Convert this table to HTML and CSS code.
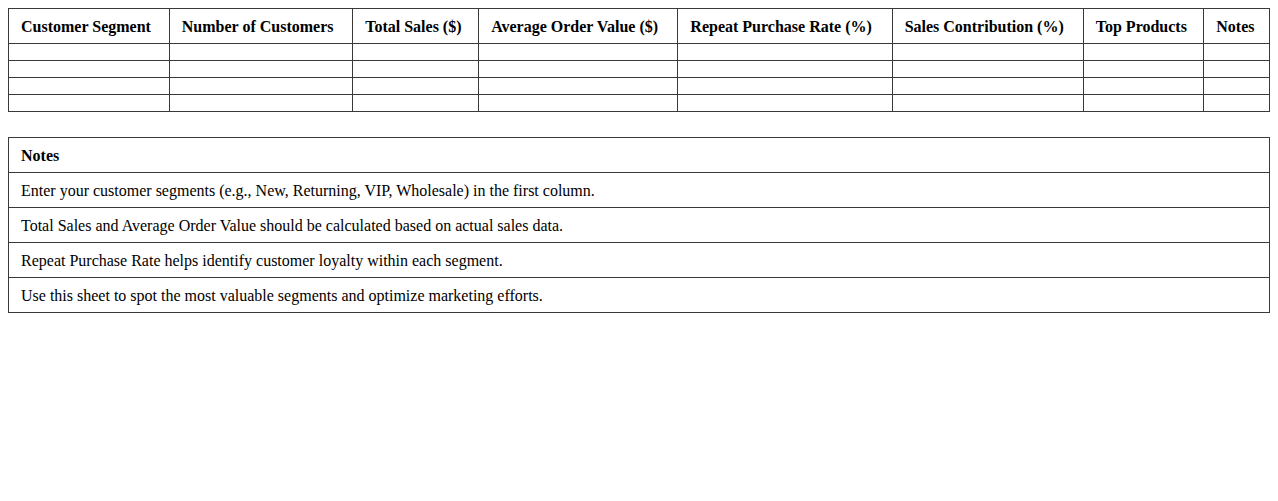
FILE: index.html
```html
<!DOCTYPE html>
<html>
<head>
<meta charset="utf-8">
<link rel="stylesheet" href="styles.css">
</head>
<body>
<table class="sheet">
  <thead>
    <tr>
      <th>Customer Segment</th>
      <th>Number of Customers</th>
      <th>Total Sales ($)</th>
      <th>Average Order Value ($)</th>
      <th>Repeat Purchase Rate (%)</th>
      <th>Sales Contribution (%)</th>
      <th>Top Products</th>
      <th>Notes</th>
    </tr>
  </thead>
  <tbody>
    <tr><td></td><td></td><td></td><td></td><td></td><td></td><td></td><td></td></tr>
    <tr><td></td><td></td><td></td><td></td><td></td><td></td><td></td><td></td></tr>
    <tr><td></td><td></td><td></td><td></td><td></td><td></td><td></td><td></td></tr>
    <tr><td></td><td></td><td></td><td></td><td></td><td></td><td></td><td></td></tr>
  </tbody>
</table>
<table class="sheet notes">
  <thead>
    <tr><th>Notes</th></tr>
  </thead>
  <tbody>
    <tr><td>Enter your customer segments (e.g., New, Returning, VIP, Wholesale) in the first column.</td></tr>
    <tr><td>Total Sales and Average Order Value should be calculated based on actual sales data.</td></tr>
    <tr><td>Repeat Purchase Rate helps identify customer loyalty within each segment.</td></tr>
    <tr><td>Use this sheet to spot the most valuable segments and optimize marketing efforts.</td></tr>
  </tbody>
</table>
</body>
</html>
```
FILE: styles.css
```css
body {
  margin: 8px;
  font-family: "Liberation Serif", "Times New Roman", serif;
  font-size: 16px;
  color: #000;
  background: #fff;
}
.sheet {
  width: 100%;
  border-collapse: collapse;
}
.sheet th,
.sheet td {
  border: 1px solid #3a3a3a;
  padding: 9px 12px 7px;
  text-align: left;
}
.sheet tbody td:empty {
  padding: 8px 12px;
}
.sheet th {
  font-weight: bold;
}
.notes {
  margin-top: 25px;
}
```
